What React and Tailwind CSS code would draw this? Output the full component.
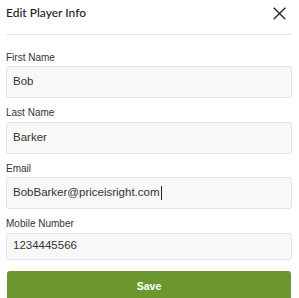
const fields = [
    { label: 'First Name', value: 'Bob', h: 'h-[32px]' },
    { label: 'Last Name', value: 'Barker', h: 'h-[32px]' },
    { label: 'Email', value: 'BobBarker@priceisright.com', h: 'h-[32px]', caret: true },
    { label: 'Mobile Number', value: '1234445566', h: 'h-[27px]' },
];

const Field = ({ label, value, h, caret }) => (
    <div>
        <div className="text-[10px] leading-[12px] text-[#333] mb-[2.5px]">{label}</div>
        <div className={`${h} flex items-center rounded-[3px] border border-[#e2e2e2] bg-[#f8f8f8] px-[6px] text-[11.5px] text-[#333]`}>
            <span>{value}</span>
            {caret && <span className="ml-[1px] inline-block h-[14px] w-[1px] bg-[#222]" />}
        </div>
    </div>
);

const App = () => {
    return (
        <div className="w-[299px] h-[298px] overflow-hidden bg-white" style={{ fontFamily: '"Liberation Sans", Arial, sans-serif' }}>
            <div className="flex items-start justify-between pl-[6px] pr-[13px] pt-[5px] h-[34px]">
                <h2 className="text-[12px] leading-[16px] font-medium text-[#222]" style={{ fontFamily: 'Lato, sans-serif' }}>Edit Player Info</h2>
                <svg width="13" height="13" viewBox="0 0 13 13" className="mt-[2px]">
                    <path d="M0.7 0.7 L12.3 12.3 M12.3 0.7 L0.7 12.3" stroke="#222" strokeWidth="1.3" fill="none" />
                </svg>
            </div>
            <div className="ml-[6px] mr-[8px] h-px bg-[#e3e3e3]" />
            <div className="pl-[6px] pr-[7px] pt-[16.5px] flex flex-col gap-[9px]">
                {fields.map((f) => (
                    <Field key={f.label} {...f} />
                ))}
                <button className="mt-[2px] mx-[1px] h-[32px] rounded-[3px] bg-[#6b972e] text-white text-[10.5px] font-bold">Save</button>
            </div>
        </div>
    );
};

export default App;
